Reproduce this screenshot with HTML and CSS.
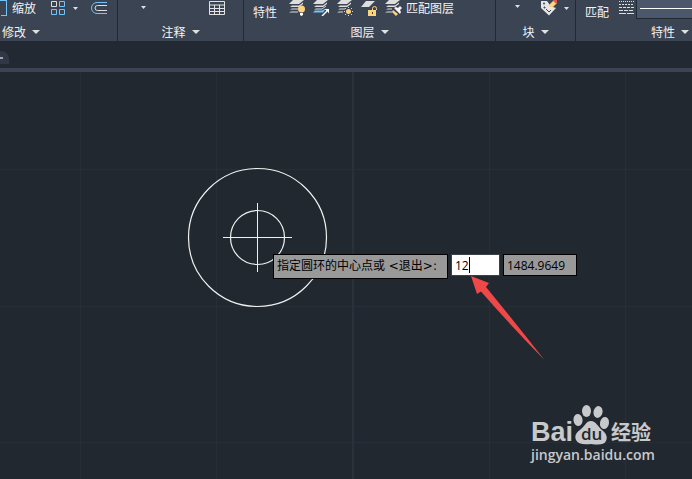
FILE: index.html
```html
<!DOCTYPE html>
<html lang="zh-CN">
<head>
<meta charset="utf-8">
<title>CAD</title>
<link rel="stylesheet" href="styles.css">
</head>
<body>
<header class="ribbon">
  <section class="panel panel-modify">
    <div class="tools">
      <button class="tool tool-text"><svg class="edge-icon" width="7" height="16" viewBox="0 0 7 16"><path d="M0 .5h6.500M6.500 0v15.500M1 15.500h6" fill="none" stroke="#72c4fb"/></svg>缩放</button>
      <button class="tool" aria-label="阵列"><svg width="16" height="16" viewBox="0 0 16 16" fill="none"><path d="M1.500 1.500h5v5h-5z" stroke="#e0dede"/><path d="M9.500 1.500h5v5h-5zM1.500 9.500h5v5h-5zM9.500 9.500h5v5h-5z" stroke="#72c4fb"/></svg></button>
      <button class="tool drop" aria-label="阵列选项"><svg width="5" height="3"><path d="M0 0h5L2.500 3z" fill="#e0e0e0"/></svg></button>
      <button class="tool" aria-label="偏移"><svg width="17" height="16" viewBox="0 0 17 16" fill="none"><path d="M16 2.500H6a5.500 5.500 0 0 0 0 11H16" stroke="#72c4fb"/><path d="M16 5.500H6.500a2.500 2.500 0 0 0 0 5H16" stroke="#e0dede"/></svg></button>
    </div>
    <button class="title">修改<svg width="8" height="4"><path d="M0 0h8L4 4z" fill="#e0e0e0"/></svg></button>
  </section>
  <section class="panel panel-annotate">
    <div class="tools">
      <button class="tool drop" aria-label="标注选项"><svg width="5" height="3"><path d="M0 0h5L2.500 3z" fill="#e0e0e0"/></svg></button>
      <button class="tool" aria-label="表格"><svg width="16" height="16" viewBox="0 0 16 16" fill="none" stroke="#e4e2e2"><path d="M.5 1.500h15v13H.5zM0 5h16M0 8.500h16M0 11.500h16M5.500 5v10M10.500 5v10"/></svg></button>
    </div>
    <button class="title">注释<svg width="8" height="4"><path d="M0 0h8L4 4z" fill="#e0e0e0"/></svg></button>
  </section>
  <section class="panel panel-layers">
    <div class="tools">
      <button class="tool tool-text low">特性</button>
      <div class="icons">
        <button class="tool" aria-label="关闭图层"><svg width="17" height="16" viewBox="0 0 17 16"><path d="M4 0h11l-5 4H0z" fill="#dedede"/><path d="M3 5.500h7l4-3v1.500l-4 3H1zM3 8.500h6v1H1zM2 11.500h7v1H0z" fill="#dedede"/><circle cx="12.500" cy="9" r="3.500" fill="#ffd27c"/><path d="M11 13h3v2l-1.500 1-1.500-1z" fill="#fff"/></svg></button>
        <button class="tool" aria-label="置为当前"><svg width="17" height="16" viewBox="0 0 17 16"><path d="M4 0h11l-5 4H0z" fill="#dedede"/><path d="M3 5.500h7l4-3v1.500l-4 3H1z" fill="#dedede"/><path d="M3 8.500h6l4-3v1l-4 3H1z" fill="#dedede"/><path d="M2 10.500h7l4-2-3 4H0z" fill="#72c4fb"/><path d="M8.500 15.500l5-5-2-1.500H16v4.500l-1.500-2-5 5z" fill="#fff"/></svg></button>
        <button class="tool" aria-label="冻结"><svg width="17" height="16" viewBox="0 0 17 16"><path d="M4 0h11l-5 4H0zM3 5.500h7l4-3v1.500l-4 3H1zM3 8.500h5v1H1zM2 11.500h4v1H0z" fill="#dedede"/><circle cx="11.500" cy="11.500" r="2.500" fill="#ffd27c"/><path d="M11.500 7v1M11.500 15v1M7 11.500h1M15 11.500h1M8 8l1 1M14 14l1 1M8 15l1-1M14 9l1-1" stroke="#ffd27c"/></svg></button>
        <button class="tool" aria-label="解锁"><svg width="17" height="16" viewBox="0 0 17 16"><path d="M5 1h9L8 7H0z" fill="#dedede"/><path d="M7 10h8v6H7z" fill="#ffd27c"/><path d="M11.500 10V8.500a2 2 0 0 1 4 0V10" fill="none" stroke="#ffd27c"/><path d="M11 12h1v2h-1z" fill="#3b4453"/></svg></button>
        <button class="tool" aria-label="匹配图层图标"><svg width="17" height="16" viewBox="0 0 17 16"><path d="M4 0h11l-5 4H0zM3 5.500h7l4-3v1.500l-4 3H1zM3 8.500h4v1H1zM2 11.500h5v1H0z" fill="#dedede"/><path d="M8 10l5 4-2 2-4-4z" fill="#ffd27c"/><path d="M9 8l2-1 2 1 2-2 2 2-2 2 1 2-1 2z" fill="#f4f4f4"/></svg></button>
      </div>
      <button class="tool tool-text">匹配图层</button>
    </div>
    <button class="title">图层<svg width="8" height="4"><path d="M0 0h8L4 4z" fill="#e0e0e0"/></svg></button>
  </section>
  <section class="panel panel-block">
    <div class="tools">
      <button class="tool drop" aria-label="插入选项"><svg width="5" height="3"><path d="M0 0h5L2.500 3z" fill="#e0e0e0"/></svg></button>
      <button class="tool" aria-label="编辑属性"><svg width="17" height="16" viewBox="0 0 17 16"><path d="M0 1h6l3 4 3 2 3 1-7 7.500L0 8z" fill="#e6e4e4"/><circle cx="3" cy="3.500" r="1" fill="#3b4453"/><path d="M3 7h1v1H3zM5 9l3 3 2-2" stroke="#3b4453" fill="none"/><path d="M8 7l1-3 4-4 3 3-4 4z" fill="#ffd27c"/><path d="M12 1l1-1h3v2l-1 1.500z" fill="#ef5350"/></svg></button>
      <button class="tool drop" aria-label="属性选项"><svg width="5" height="3"><path d="M0 0h5L2.500 3z" fill="#e0e0e0"/></svg></button>
    </div>
    <button class="title">块<svg width="8" height="4"><path d="M0 0h8L4 4z" fill="#e0e0e0"/></svg></button>
  </section>
  <section class="panel panel-props">
    <div class="tools">
      <button class="tool tool-text low">匹配</button>
      <button class="tool" aria-label="线型"><svg width="16" height="16" viewBox="0 0 16 16" stroke="#dedede"><path d="M1 1.500h15" stroke-dasharray="1 1"/><path d="M1 4.500h15" stroke-dasharray="2 1"/><path d="M1 7.500h15" stroke-dasharray="3 1"/><path d="M1 10.500h15" stroke-dasharray="4 1"/><path d="M1 13.500h15" stroke-dasharray="7 1"/></svg></button>
      <button class="linetype" aria-label="线型列表"><span class="line"></span></button>
    </div>
    <button class="title">特性<svg width="8" height="4"><path d="M0 0h8L4 4z" fill="#e0e0e0"/></svg></button>
  </section>
</header>
<nav class="tabs"><button class="tab" aria-label="图形选项卡"><span class="dash"></span></button></nav>
<main class="canvas">
  <svg class="drawing" width="100%" height="100%">
    <g fill="none" stroke="#262e38">
      <path d="M80.500 0v2000M216.500 0v2000M489.500 0v2000M625.500 0v2000M0 97.500h4000M0 234.500h4000M0 370.500h4000"/>
      <path d="M353 0v2000" stroke="#29313d" stroke-width="2"/>
    </g>
    <g fill="none" stroke="#f0f0f0" stroke-width="1.200">
      <circle cx="257.500" cy="165.500" r="69"/>
      <circle cx="257.500" cy="165.500" r="27"/>
      <path d="M223 165.500h69M257.500 131v69" stroke-width="1"/>
    </g>
  </svg>
  <form class="prompt">
    <label class="message" for="px">指定圆环的中心点或 &lt;退出&gt;:</label>
    <span class="entry"><input id="px" class="field active" type="text" value="12"><span class="cursor"></span></span>
    <input class="field" type="text" value="1484.9649" aria-label="Y">
  </form>
  <svg class="arrow" width="74" height="85" viewBox="0 0 74 85"><path d="M0 0L18 7l-3 4Q42 44 73.500 84Q40 50 10 15.500L6 18z" fill="#ef4849"/></svg>
  <div class="mark">
    <div class="brand">
      <span class="bai">Bai</span>
      <span class="paw">
        <svg width="37" height="40" viewBox="0 0 37 40" fill="#c8c9cb"><ellipse cx="5" cy="15" rx="4.500" ry="6" transform="rotate(-8 5 15)"/><ellipse cx="13.500" cy="6" rx="4.500" ry="6"/><ellipse cx="25" cy="7" rx="4.500" ry="6" transform="rotate(12 25 7)"/><ellipse cx="31.500" cy="18" rx="4.500" ry="6" transform="rotate(10 31.500 18)"/><path d="M18 16c5 0 7 6 11 9 4 3 6 7 4 11-2 4-7 4-15 3-8 1-13 0-15-4-2-5 1-8 5-11 4-3 5-8 10-8z"/></svg>
        <span class="du">du</span>
      </span>
      <span class="jingyan">经验</span>
    </div>
    <div class="url">jingyan.baidu.com</div>
  </div>
</main>
</body>
</html>
```
FILE: styles.css
```css
* { box-sizing: border-box; }

body {
  margin: 0;
  min-height: 100vh;
  display: flex;
  flex-direction: column;
  overflow: hidden;
  background: #222933;
  color: #f2f2f2;
  font: 12px/16px "Noto Sans CJK SC", sans-serif;
}

button {
  margin: 0;
  padding: 0;
  border: 0;
  background: none;
  color: inherit;
  font: inherit;
}

svg { display: block; flex: none; }

/* Ribbon */
.ribbon { display: flex; background: #3b4453; }

.panel {
  flex: none;
  display: flex;
  flex-direction: column;
  padding-bottom: 1px;
  border-right: 1px solid #222933;
}

.panel-modify { width: 118px; }
.panel-annotate { width: 126px; }
.panel-layers { width: 252px; }
.panel-block { width: 80px; }
.panel-props { flex: 1; border-right: 0; }

.tools { display: flex; height: 24px; align-items: flex-start; }
.tool { display: flex; flex: none; }
.tool-text { align-items: center; white-space: nowrap; }
.low { margin-top: 4px; }
.drop { padding-top: 7px; }

.title {
  display: flex;
  align-items: center;
  justify-content: center;
  gap: 6px;
  height: 16px;
}

.edge-icon { margin-right: 5px; }

.panel-modify .tools { gap: 14px; }
.panel-modify .drop { margin: 0 -1px 0 -7px; }
.panel-modify .title { justify-content: flex-start; padding-left: 2px; }

.panel-annotate .tools { justify-content: space-between; padding: 0 18px 0 23px; }
.panel-annotate .drop { padding-top: 6px; }

.panel-layers .tools { gap: 4px; padding-left: 9px; }
.icons { display: flex; gap: 7px; padding-left: 8px; }

.panel-block .tools { justify-content: space-between; padding: 0 6px 0 19px; }
.panel-block .drop:first-child { padding-top: 5px; margin-right: 14px; }

.panel-props .tools { gap: 9px; padding-left: 9px; }
.panel-props .title { justify-content: flex-end; padding-right: 3px; }

.linetype {
  flex: 1;
  display: flex;
  height: 19px;
  margin-left: -7px;
  padding: 8px 0 0 3px;
  border: solid #222933;
  border-width: 0 0 1px 1px;
  background: #4b576a;
}

.line { flex: 1; height: 1px; background: #fff; }

/* Drawing tabs */
.tabs { height: 31px; padding-top: 10px; border-bottom: 4px solid #3b4453; }
.tab {
  display: flex;
  align-items: center;
  width: 9px;
  height: 13px;
  border-radius: 0 8px 0 0;
  background: #303746;
}
.dash { width: 3px; height: 2px; background: #a4a6aa; }

/* Drawing area */
.canvas { position: relative; flex: 1; background: #212830; }
.drawing { position: absolute; inset: 0; }

.prompt {
  position: absolute;
  left: 273px;
  top: 182px;
  display: flex;
  align-items: flex-start;
  gap: 3px;
  color: #000;
}

.message {
  width: 175px;
  height: 25px;
  padding: 3px;
  border: 1px solid #000;
  background: #999;
  font: 12px/16px "DejaVu Sans", "Noto Sans CJK SC", sans-serif;
  white-space: nowrap;
}

.field {
  display: block;
  width: 74px;
  height: 22px;
  padding: 0 3px;
  border: 1px solid #000;
  border-radius: 0;
  background: #999;
  color: #000;
  font: 12px/16px "Open Sans", sans-serif;
}

.entry { position: relative; }
.active { width: 49px; border-color: #3c4048; background: #fff; }
.cursor { position: absolute; left: 18px; top: 3px; width: 1px; height: 16px; background: #000; }

.arrow { position: absolute; left: 471px; top: 204px; }

/* Watermark */
.mark { position: absolute; left: 531px; top: 333px; color: #c8c9cb; }
.brand { display: flex; align-items: flex-end; height: 40px; }
.bai { width: 42px; font: bold 27px/26px "Liberation Sans", sans-serif; }
.paw { position: relative; width: 38px; }
.du {
  position: absolute;
  left: 8px;
  bottom: 2px;
  color: #212830;
  font: 600 17px/18px "Open Sans", sans-serif;
}
.jingyan { font-size: 20px; font-weight: bold; line-height: 26px; }
.url { font: 600 14px/20px "Open Sans", sans-serif; }
```
